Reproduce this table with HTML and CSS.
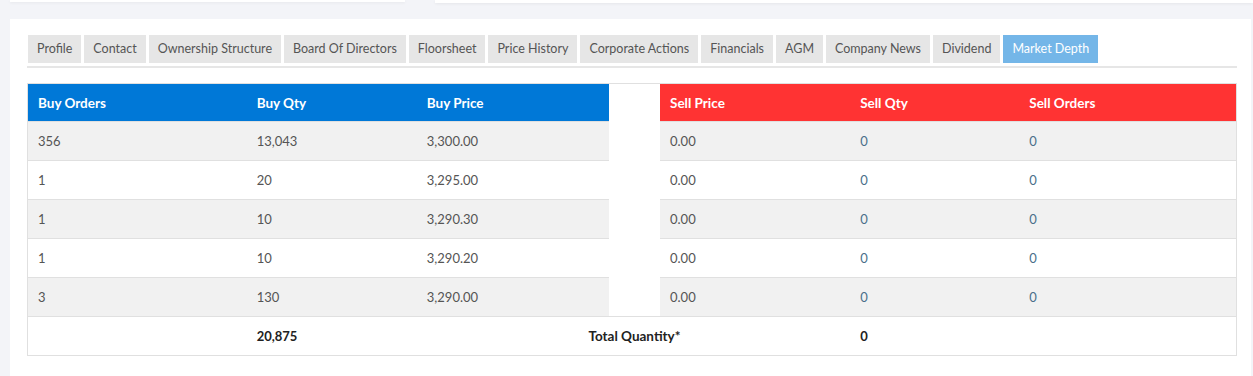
FILE: index.html
```html
<!DOCTYPE html>
<html>
<head>
<meta charset="utf-8">
<link rel="stylesheet" href="styles.css">
</head>
<body>
<div class="top-row">
  <div class="top-card top-left"></div>
  <div class="top-card top-right"></div>
</div>
<div class="main-card">
  <ul class="tabs">
    <li class="tab">Profile</li>
    <li class="tab">Contact</li>
    <li class="tab">Ownership Structure</li>
    <li class="tab">Board Of Directors</li>
    <li class="tab">Floorsheet</li>
    <li class="tab">Price History</li>
    <li class="tab">Corporate Actions</li>
    <li class="tab">Financials</li>
    <li class="tab">AGM</li>
    <li class="tab">Company News</li>
    <li class="tab">Dividend</li>
    <li class="tab active">Market Depth</li>
  </ul>
  <table class="depth">
    <colgroup>
      <col class="c1"><col class="c2"><col class="c3"><col class="cg"><col class="c4"><col class="c5"><col class="c6">
    </colgroup>
    <thead>
      <tr>
        <th class="buy">Buy Orders</th>
        <th class="buy">Buy Qty</th>
        <th class="buy">Buy Price</th>
        <th class="gap"></th>
        <th class="sell">Sell Price</th>
        <th class="sell">Sell Qty</th>
        <th class="sell">Sell Orders</th>
      </tr>
    </thead>
    <tbody>
      <tr class="odd"><td>356</td><td>13,043</td><td>3,300.00</td><td class="gap"></td><td>0.00</td><td class="blue">0</td><td class="blue">0</td></tr>
      <tr><td>1</td><td>20</td><td>3,295.00</td><td class="gap"></td><td>0.00</td><td class="blue">0</td><td class="blue">0</td></tr>
      <tr class="odd"><td>1</td><td>10</td><td>3,290.30</td><td class="gap"></td><td>0.00</td><td class="blue">0</td><td class="blue">0</td></tr>
      <tr><td>1</td><td>10</td><td>3,290.20</td><td class="gap"></td><td>0.00</td><td class="blue">0</td><td class="blue">0</td></tr>
      <tr class="odd"><td>3</td><td>130</td><td>3,290.00</td><td class="gap"></td><td>0.00</td><td class="blue">0</td><td class="blue">0</td></tr>
      <tr class="total"><td></td><td>20,875</td><td></td><td class="gap center"><span class="total-label">Total Quantity*</span></td><td></td><td>0</td><td></td></tr>
    </tbody>
  </table>
</div>
</body>
</html>
```
FILE: styles.css
```css
* { box-sizing: border-box; }
html, body { margin: 0; padding: 0; }
body {
  background: #f3f4f8;
  font-family: "Lato", "Noto Sans", sans-serif;
  font-size: 13px;
  color: #555;
  height: 376px;
  overflow: hidden;
}
.top-row {
  display: flex;
  padding-left: 10px;
  gap: 30px;
  height: 3px;
}
.top-card {
  background: #fff;
  box-shadow: 0 1px 3px rgba(0,0,0,0.06);
}
.top-left { width: 395px; height: 2px; }
.top-right { flex: 1; height: 3px; }
.main-card {
  margin: 16px 2px 0 10px;
  background: #fff;
  padding: 16px 14px 0 17px;
  height: 357px;
}
.tabs {
  list-style: none;
  margin: 0;
  padding: 0 0 3px 1px;
  display: flex;
  gap: 3px;
  border-bottom: 2px solid #e6e6e6;
}
.tab {
  background: #e6e6e6;
  color: #555;
  height: 28px;
  line-height: 28px;
  padding: 0 9px;
  font-size: 12.5px;
  white-space: nowrap;
}
.tab.active {
  background: #74b6e8;
  color: #fff;
}
.depth {
  margin-top: 15px;
  width: 1210px;
  border-collapse: collapse;
  border: 1px solid #e0e0e0;
  table-layout: fixed;
}
.c1 { width: 219px; }
.c2 { width: 170px; }
.c3 { width: 192px; }
.cg { width: 51px; }
.c4 { width: 190px; }
.c5 { width: 169px; }
.c6 { width: 217px; }
th, td {
  height: 38px;
  padding: 0 10px;
  text-align: left;
  vertical-align: middle;
}
th {
  color: #fff;
  font-weight: 700;
  font-size: 13.5px;
}
th.buy { background: #0078d7; }
th.sell { background: #ff3333; }
th.gap { background: #fff; }
td {
  border-top: 1px solid #e0e0e0;
  height: 39px;
}
td.gap { border-top: none; background: #fff; }
tr.odd td { background: #f1f1f1; }
tr.odd td.gap { background: #fff; }
td.blue { color: #4a6f8a; }
tr.total td { border-top: 1px solid #e0e0e0; font-weight: 700; color: #222; }
td.center { text-align: center; white-space: nowrap; overflow: visible; padding: 0; }
.total-label { display: inline-block; margin: 0 -60px; font-size: 13.5px; }
```
